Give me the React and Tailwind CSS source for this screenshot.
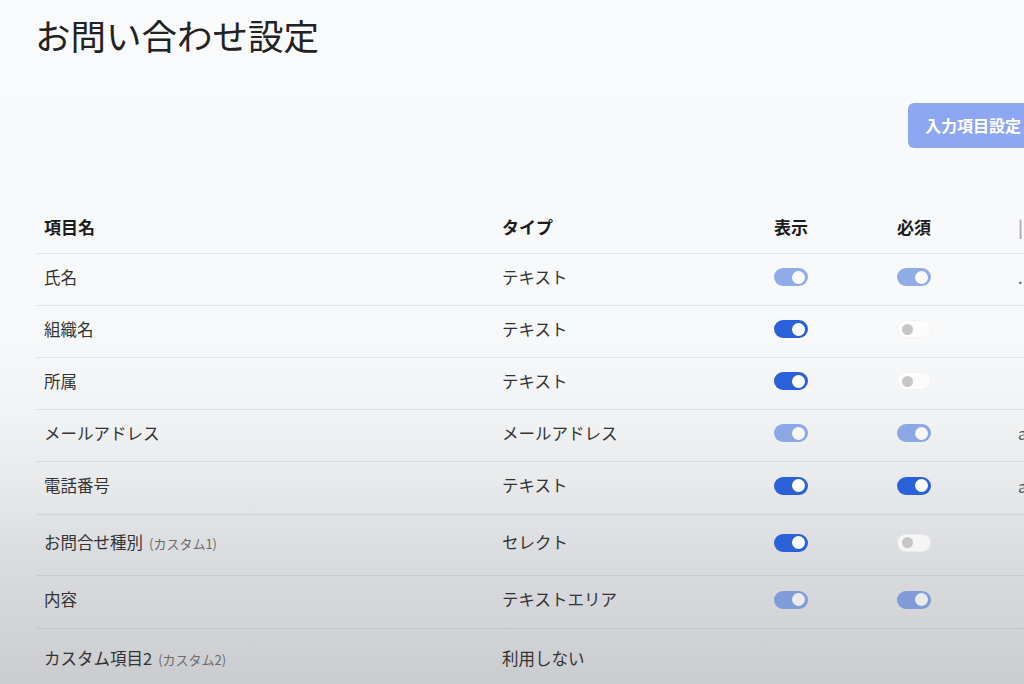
import React from "react";

const FONT = { fontFamily: '"Noto Sans CJK JP", "Noto Sans", sans-serif' };

function Toggle({ state }) {
  if (state === "off") {
    return (
      <div className="w-[34px] h-[18px] rounded-full bg-white/70 border border-black/[0.04] flex items-center pl-[4px]">
        <div className="w-[11px] h-[11px] rounded-full bg-[#c6c6c8]" />
      </div>
    );
  }
  const dim = state === "dim";
  return (
    <div
      className={
        "w-[34px] h-[18px] rounded-full bg-[#2b61d8] flex items-center justify-end pr-[3px] " +
        (dim ? "opacity-50" : "")
      }
    >
      <div className="w-[13px] h-[13px] rounded-full bg-white" />
    </div>
  );
}

const rows = [
  { name: "氏名", type: "テキスト", show: "dim", req: "dim", extra: ".", h: "h-[52px] pb-[4px]" },
  { name: "組織名", type: "テキスト", show: "on", req: "off", extra: "", h: "h-[52px] pb-[4px]" },
  { name: "所属", type: "テキスト", show: "on", req: "off", extra: "", h: "h-[52px] pb-[4px]" },
  { name: "メールアドレス", type: "メールアドレス", show: "dim", req: "dim", extra: "a", h: "h-[52px] pb-[4px]" },
  { name: "電話番号", type: "テキスト", show: "on", req: "on", extra: "a", h: "h-[53px] pb-[4px]" },
  { name: "お問合せ種別", sub: "(カスタム1)", type: "セレクト", show: "on", req: "off", extra: "", h: "h-[61px] pb-[4px]" },
  { name: "内容", type: "テキストエリア", show: "dim", req: "dim", extra: "", h: "h-[53px] pb-[4px]" },
  { name: "カスタム項目2", sub: "(カスタム2)", type: "利用しない", show: null, req: null, extra: "", h: "h-[60px]", last: true },
];

export default function App() {
  return (
    <div
      className="w-[1024px] h-[684px] overflow-hidden bg-[linear-gradient(180deg,#f9fafc_0%,#f7f8fa_50%,#f2f3f5_60%,#e9eaec_70%,#dcdde0_80%,#d4d5d8_90%,#cbcccf_100%)]"
      style={FONT}
    >
      <h1 className="pt-[17px] pl-[35px] text-[35.5px] leading-none font-normal text-[#222]">
        お問い合わせ設定
      </h1>

      <div className="mt-[50px] flex">
        <div className="ml-[908px] h-[45px] w-[140px] shrink-0 rounded-[6px] bg-[#8da7f3] flex items-center pl-[17px]">
          <span className="text-[16px] font-bold text-white whitespace-nowrap">入力項目設定</span>
        </div>
      </div>

      <div className="mt-[56px] ml-[36px] w-[1100px]">
        <div className="grid grid-cols-[466px_272px_123px_119px_120px] h-[50px] pb-[2px] items-center border-b border-black/[0.07]">
          <div className="pl-[8px] text-[17px] font-bold text-[#1c1c1c]">項目名</div>
          <div className="text-[17px] font-bold text-[#1c1c1c]">タイプ</div>
          <div className="text-[17px] font-bold text-[#1c1c1c]">表示</div>
          <div className="text-[17px] font-bold text-[#1c1c1c]">必須</div>
          <div className="pl-[2px] text-[17px] font-bold text-[#aaa]">|</div>
        </div>
        {rows.map((r, i) => (
          <div
            key={i}
            className={
              "grid grid-cols-[466px_272px_123px_119px_120px] items-center " +
              r.h +
              (r.last ? "" : " border-b border-black/[0.07]")
            }
          >
            <div className="pl-[8px] text-[16.5px] text-[#333] whitespace-nowrap">
              {r.name}
              {r.sub && <span className="ml-[6px] text-[13px] text-[#6b6b6b]">{r.sub}</span>}
            </div>
            <div className="text-[16.5px] text-[#333] whitespace-nowrap">{r.type}</div>
            <div>{r.show && <Toggle state={r.show} />}</div>
            <div>{r.req && <Toggle state={r.req} />}</div>
            <div className="pl-[2px] text-[16px] text-[#555]">{r.extra}</div>
          </div>
        ))}
      </div>
    </div>
  );
}
